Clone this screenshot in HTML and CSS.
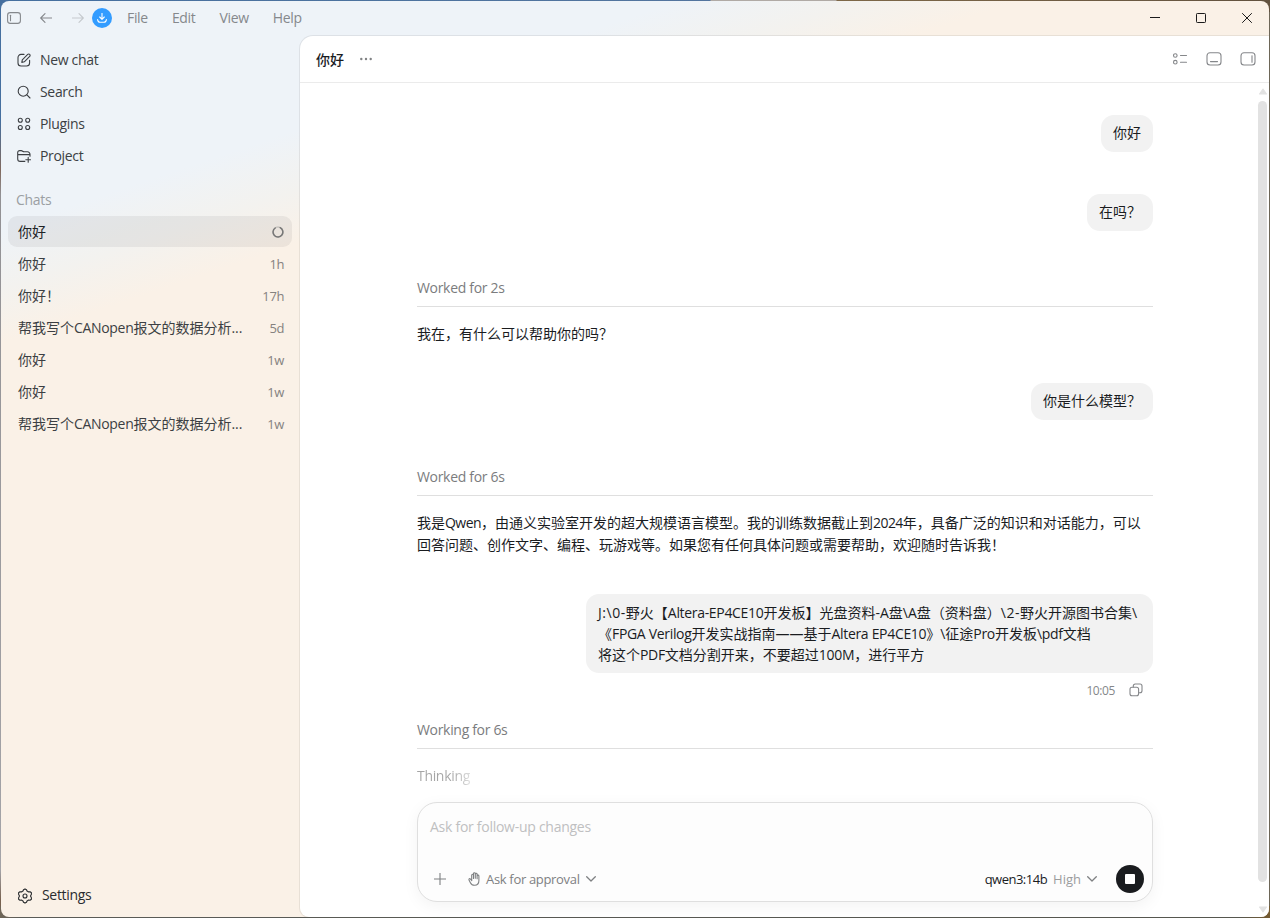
FILE: index.html
```
<!DOCTYPE html>
<html lang="zh-CN">

<head>
    <meta charset="UTF-8" />
    <meta name="viewport" content="width=device-width, initial-scale=1.0" />
    <title>你好</title>
    <link rel="stylesheet" href="styles.css">
</head>

<body>
    <div class="window">
        <header class="titlebar">
            <svg class="tb-panel" width="14" height="12" viewBox="0 0 14 12"><rect x=".6" y=".6" width="12.8" height="10.8" rx="2.6"/><path d="M3.5 3.3v5.4"/></svg>
            <svg class="tb-back" width="12" height="10" viewBox="0 0 12 10"><path d="M11.8 5H.8M5 .7.7 5 5 9.3"/></svg>
            <svg class="tb-next" width="12" height="10" viewBox="0 0 12 10"><path d="M.2 5h11M7 .7 11.3 5 7 9.3"/></svg>
            <span class="update"><svg width="10" height="10" viewBox="0 0 10 10"><path d="M5 .3v5.9M2.7 4 5 6.3 7.3 4M.6 6.6C.8 8.6 1.5 9.2 3 9.2h4c1.5 0 2.2-.6 2.4-2.6"/></svg></span>
            <nav class="menu en">
                <span>File</span><span>Edit</span><span>View</span><span>Help</span>
            </nav>
            <div class="controls">
                <svg width="10" height="10" viewBox="0 0 10 10"><path d="M0 4.5h10"/></svg>
                <svg width="10" height="10" viewBox="0 0 10 10"><rect x=".5" y=".5" width="9" height="9" rx=".8"/></svg>
                <svg width="10" height="10" viewBox="0 0 10 10"><path d="m.2.2 9.6 9.6M9.8.2.2 9.8"/></svg>
            </div>
        </header>

        <aside class="sidebar">
            <nav class="actions en">
                <a><svg width="14" height="14" viewBox="0 0 14 14"><path d="M7 1.400H4A3 3 0 0 0 1 4.400V10a3 3 0 0 0 3 3h5.600a3 3 0 0 0 3-3V7.200"/><path d="m4.800 9.400.5-2.600L10.700 1.400a1.400 1.400 0 0 1 2 2L7.300 8.800z"/></svg>New chat</a>
                <a><svg width="14" height="14" viewBox="0 0 14 14"><circle cx="6.2" cy="6.2" r="5"/><path d="m9.9 9.9 3.1 3.1"/></svg>Search</a>
                <a><svg width="14" height="14" viewBox="0 0 14 14"><circle cx="3.3" cy="3.3" r="2"/><circle cx="10.7" cy="3.3" r="2"/><circle cx="3.3" cy="10.5" r="2"/><circle cx="10.7" cy="10.5" r="2"/></svg>Plugins</a>
                <a><svg width="14" height="14" viewBox="0 0 14 14"><path d="M7.800 12.400H3.200A2.500 2.500 0 0 1 .7 9.900V3.600a2 2 0 0 1 2-2h1.500c1.400 0 1.500 1.200 2.900 1.200h3.400a2.500 2.500 0 0 1 2.500 2.500v1.900M.7 5.600h12.300M11.200 8.400v4.800M8.800 10.800h4.800"/></svg>Project</a>
            </nav>
            <h2 class="en">Chats</h2>
            <ul class="chats">
                <li class="active"><span class="name">你好</span><svg class="spinner" width="12" height="12" viewBox="0 0 12 12"><circle cx="6" cy="6" r="4.9"/><path d="M8.200 1.700A4.900 4.900 0 1 1 3.200 2"/></svg></li>
                <li><span class="name">你好</span><time>1h</time></li>
                <li><span class="name">你好！</span><time>17h</time></li>
                <li><span class="name">帮我写个<span class="en">CANopen</span>报文的数据分析...</span><time>5d</time></li>
                <li><span class="name">你好</span><time>1w</time></li>
                <li><span class="name">你好</span><time>1w</time></li>
                <li><span class="name">帮我写个<span class="en">CANopen</span>报文的数据分析...</span><time>1w</time></li>
            </ul>
            <a class="settings en"><svg width="16" height="16" viewBox="0 0 16 16"><path d="M6.500 1.700 8 .9l1.500.8.5 1.300 1.600.9 1.500-.2 1.300 1V6.300L13.500 8l.9 1.700v1.600l-1.300 1-1.500-.2-1.600.9-.5 1.300-1.500.8-1.500-.8L6 13l-1.600-.9-1.500.2-1.300-1V9.700L2.500 8l-.9-1.700V4.700l1.300-1 1.500.2L6 3z"/><circle cx="8" cy="8" r="2"/></svg>Settings</a>
        </aside>

        <main class="main">
            <header class="head">
                <h1>你好</h1>
                <svg class="dots" width="12" height="4" viewBox="0 0 12 4"><circle cx="1.3" cy="2" r="1.2"/><circle cx="6" cy="2" r="1.2"/><circle cx="10.7" cy="2" r="1.2"/></svg>
                <div class="views">
                    <svg width="16" height="14" viewBox="0 0 16 14"><circle cx="3.3" cy="3.5" r="1.8"/><circle cx="3.3" cy="10.2" r="1.8"/><path d="M8.500 3.500h6M8.500 10.200h6"/></svg>
                    <svg width="16" height="14" viewBox="0 0 16 14"><rect x="1" y=".7" width="14" height="12.3" rx="3"/><path d="M4.500 9.600h7"/></svg>
                    <svg width="16" height="14" viewBox="0 0 16 14"><rect x="1" y=".7" width="14" height="12.3" rx="3"/><path d="M12 3.700v6.600"/></svg>
                </div>
            </header>

            <div class="body">
                <section class="thread">
                    <div class="bubble">你好</div>
                    <div class="bubble">在吗？</div>
                    <div class="status en">Worked for 2s</div>
                    <p class="answer">我在，有什么可以帮助你的吗？</p>
                    <div class="bubble">你是什么模型？</div>
                    <div class="status en">Worked for 6s</div>
                    <p class="answer">我是<span class="en">Qwen</span>，由通义实验室开发的超大规模语言模型。我的训练数据截止到<span class="en">2024</span>年，具备广泛的知识和对话能力，可以<br>回答问题、创作文字、编程、玩游戏等。如果您有任何具体问题或需要帮助，欢迎随时告诉我！</p>
                    <div class="bubble wide"><span class="path">J:\0-</span>野火【<span class="en">Altera-EP4CE10</span>开发板】光盘资料-A盘\A盘（资料盘）<span class="path">\2-</span>野火开源图书合集\<br>《<span class="en">FPGA Verilog</span>开发实战指南——基于<span class="en">Altera EP4CE10</span>》\征途<span class="en">Pro</span>开发板<span class="en">\pdf</span>文档<br>将这个<span class="en">PDF</span>文档分割开来，不要超过<span class="en">100M</span>，进行平方</div>
                    <div class="meta">10:05<svg width="14" height="14" viewBox="0 0 14 14"><rect x="1" y="4.2" width="8.6" height="8.6" rx="2"/><path d="M4.300 4V3a2 2 0 0 1 2-2H11a2 2 0 0 1 2 2v4.800a2 2 0 0 1-2 2H9.800"/></svg></div>
                    <div class="status now en">Working for 6s</div>
                    <div class="thinking en"><span>Thinking</span></div>
                    <div class="composer en">
                        <div class="placeholder">Ask for follow-up changes</div>
                        <div class="tools">
                            <svg class="plus" width="12" height="12" viewBox="0 0 12 12"><path d="M6 0v12M0 6h12"/></svg>
                            <svg class="hand" width="13" height="14" viewBox="0 0 13 14"><path d="M3.700 7.800V3.200a.9.900 0 0 1 1.800 0V6.500M5.500 6.300V1.600a.9.900 0 0 1 1.800 0v4.700M7.300 6.300V2.200a.9.900 0 0 1 1.800 0v4.500M9.100 6.500V4a.9.900 0 0 1 1.800 0v4.600c0 2.900-1.700 4.700-4.300 4.700-2.200 0-3.400-1-4.200-2.600L1 7.900c-.4-1 .8-1.700 1.500-.8l1.300 1.500"/></svg>
                            <span class="approval">Ask for approval</span>
                            <svg class="chev" width="10" height="6" viewBox="0 0 10 6"><path d="m.7.7 4.3 4.3L9.3.7"/></svg>
                            <span class="model">qwen3:14b</span>
                            <span class="effort">High</span>
                            <svg class="chev" width="10" height="6" viewBox="0 0 10 6"><path d="m.7.7 4.3 4.3L9.3.7"/></svg>
                            <span class="stop"></span>
                        </div>
                    </div>
                </section>
                <div class="scrollbar">
                    <svg width="10" height="8" viewBox="0 0 10 8"><path d="M1.500 7 5 2l3.500 5z"/></svg>
                    <span class="thumb"></span>
                    <svg width="10" height="8" viewBox="0 0 10 8"><path d="M1.500 1 5 6l3.500-5z"/></svg>
                </div>
            </div>
        </main>
    </div>
</body>

</html>
```
FILE: styles.css
```
:root {
    --blue: #eef3f8;
    --cream: #faf1e7;
    --ink: #1a1c1f;
    --gray: #7b7c7e;
    --line: #dfdfdf;
}

* {
    margin: 0;
    padding: 0;
    box-sizing: border-box;
}

body {
    width: 1270px;
    height: 918px;
    padding: 1px;
    overflow: hidden;
    background: linear-gradient(90deg, #456f9f 0, #53759e 710px, #b0aaa5 711px, #b0aaa5 836px, #7e6848 837px, #62523f) top / 100% 12px no-repeat,
        linear-gradient(90deg, #6f6658, #5a5b57 20px, #56574f 1240px, #765b30) bottom / 100% 12px no-repeat,
        linear-gradient(#456f9f 120px, #80695e 170px, #929194 195px, #a4a4a8 870px, #77614f 900px) left / 50% 100% no-repeat,
        #6d6657;
    font-family: "Open Sans", "Noto Sans CJK SC", sans-serif;
    font-size: 14px;
    line-height: 21px;
    color: var(--ink);
}

svg {
    display: block;
    flex: none;
    fill: none;
    stroke: currentColor;
    stroke-width: 1.1;
    stroke-linecap: round;
    stroke-linejoin: round;
}

/* latin runs, set a little tighter */
.en {
    letter-spacing: -.32px;
}

.window {
    display: grid;
    grid-template: 35px 1fr / 299px 1fr;
    width: 1268px;
    height: 916px;
    border-radius: 8px;
    overflow: hidden;
    background: linear-gradient(161.4deg, var(--blue) 17%, #f3f2ef 21.5%, var(--cream) 25.5%);
}

/* title bar */
.titlebar {
    grid-column: 1 / 3;
    display: flex;
    align-items: center;
    height: 34px;
    padding-left: 6px;
    color: #85888c;
}

.tb-back {
    margin-left: 19px;
}

.tb-next {
    margin-left: 20px;
    color: #c5c9cd;
}

.update {
    display: grid;
    place-items: center;
    width: 20px;
    height: 20px;
    margin-left: 8px;
    border-radius: 50%;
    background: #339cff;
    color: #fff;
}

.menu {
    display: flex;
    gap: 24px;
    margin-left: 15px;
    padding-bottom: 1px;
}

.controls {
    display: flex;
    gap: 36px;
    margin-left: auto;
    padding-right: 17px;
    color: #1b1b1b;
}

.controls svg {
    stroke-width: 1;
    stroke-linecap: butt;
}

/* sidebar */
.sidebar {
    display: flex;
    flex-direction: column;
    padding: 8px 8px 6px 7px;
}

.actions a,
.settings {
    display: flex;
    align-items: center;
    gap: 9px;
    height: 32px;
    padding: 0 0 2px 9px;
    color: #3c3f43;
}

.actions svg,
.settings svg {
    margin-top: 2px;
}

.sidebar h2 {
    margin: 17px 0 6px;
    padding-left: 8px;
    font-size: 14px;
    font-weight: 400;
    color: #9b9fa3;
}

.chats {
    display: flex;
    flex-direction: column;
    gap: 1px;
    list-style: none;
}

.chats li {
    display: flex;
    align-items: center;
    justify-content: space-between;
    height: 31px;
    padding: 0 8px 0 10px;
    border-radius: 9px;
    color: #3c3f43;
}

.chats .active {
    background: rgba(50, 50, 45, .065);
    color: #202326;
}

.name {
    white-space: nowrap;
}

.chats time {
    padding-top: 2px;
    font-size: 13px;
    letter-spacing: -.4px;
    color: #85827f;
}

.spinner {
    color: #777;
    stroke-width: 1.5;
}

.spinner circle {
    opacity: .3;
}

.settings {
    height: 31px;
    margin-top: auto;
    color: #292c2f;
}

/* conversation */
.main {
    display: flex;
    flex-direction: column;
    border-top-left-radius: 13px;
    border-bottom-left-radius: 9px;
    background: #fff;
    box-shadow: 0 0 0 1px rgba(0, 0, 0, .07);
}

.head {
    display: flex;
    align-items: center;
    height: 47px;
    padding: 0 13px 0 16px;
    border-bottom: 1px solid #ebebeb;
}

.head h1 {
    font-size: 14px;
    font-weight: 500;
}

.dots {
    margin-left: 16px;
    fill: #808284;
    stroke: none;
}

.views {
    display: flex;
    gap: 18px;
    margin-left: auto;
    color: #85878a;
}

.body {
    display: flex;
    flex: 1;
}

.thread {
    display: flex;
    flex-direction: column;
    width: 736px;
    margin-left: 117px;
    padding-top: 32px;
}

.bubble {
    align-self: flex-end;
    margin-bottom: 42px;
    padding: 7px 12px 9px;
    border-radius: 13px;
    background: #f2f2f2;
    white-space: nowrap;
}

.bubble.wide {
    width: 567px;
    margin-bottom: 7px;
    padding: 8px 12px;
}

.path {
    letter-spacing: .55px;
}

.status {
    height: 30px;
    margin-top: 4px;
    border-bottom: 1px solid var(--line);
    color: var(--gray);
}

.answer {
    margin: 16px 0 38px;
    line-height: 22px;
    white-space: nowrap;
}

.answer .en {
    letter-spacing: -.55px;
}

.meta {
    display: flex;
    align-items: center;
    justify-content: flex-end;
    gap: 14px;
    height: 21px;
    padding-right: 10px;
    font-size: 12px;
    letter-spacing: -.4px;
    color: #85878a;
}

.meta svg {
    margin-top: -2px;
}

.status.now {
    margin-top: 18px;
}

.thinking {
    margin-top: 16px;
}

.thinking span {
    background: linear-gradient(90deg, #a5a5a5 65%, #ddd);
    -webkit-background-clip: text;
    background-clip: text;
    color: transparent;
}

.composer {
    display: flex;
    flex-direction: column;
    justify-content: space-between;
    height: 100px;
    margin-top: 16px;
    padding: 13px 8px 8px 12px;
    border: 1px solid var(--line);
    border-radius: 20px;
    background: #fdfdfd;
    box-shadow: 0 4px 16px rgba(0, 0, 0, .05);
}

.placeholder {
    letter-spacing: -.27px;
    color: #bfc0c1;
}

.tools {
    display: flex;
    align-items: center;
    height: 28px;
    font-size: 13px;
    color: #7e8082;
}

.plus {
    margin-left: 4px;
}

.hand {
    margin: 0 5px 0 22px;
}

.chev {
    margin-left: 6px;
    stroke-width: 1.3;
}

.model {
    margin-left: auto;
    letter-spacing: -.5px;
    color: var(--ink);
}

.effort {
    margin-left: 6px;
    letter-spacing: 0;
    color: #9b9c9d;
}

.stop {
    display: grid;
    place-items: center;
    width: 28px;
    height: 28px;
    margin-left: 19px;
    border-radius: 50%;
    background: var(--ink);
}

.stop::after {
    content: "";
    width: 10px;
    height: 10px;
    border-radius: 1px;
    background: #fff;
}

.scrollbar {
    display: flex;
    flex-direction: column;
    align-items: center;
    width: 14px;
    margin-left: auto;
    padding: 4px 0 3px 1px;
}

.scrollbar svg {
    fill: #e2e2e2;
    stroke: #e2e2e2;
}

.thumb {
    width: 9px;
    height: 781px;
    margin: 6px 0 auto;
    border-radius: 5px;
    background: #e2e2e2;
}
```
